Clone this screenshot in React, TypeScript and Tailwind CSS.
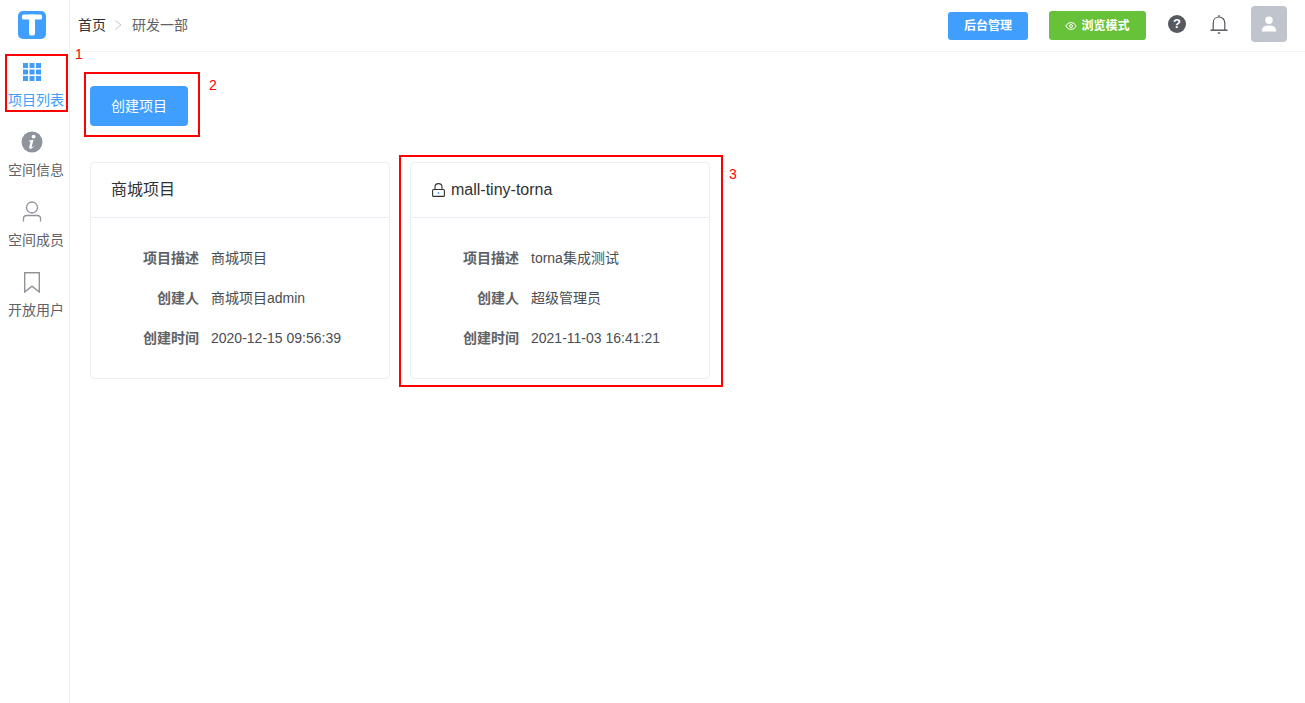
import { Eye } from "lucide-react";

const font = { fontFamily: '"Liberation Sans", "Noto Sans CJK SC", sans-serif' };

function GridIcon() {
    return (
        <svg width="18" height="18" viewBox="0 0 18 18" fill="#409eff">
            {[0, 6.5, 13].map((y) =>
                [0, 6.5, 13].map((x) => <rect key={`${x}-${y}`} x={x} y={y} width="5" height="5" />)
            )}
        </svg>
    );
}

function InfoIcon() {
    return (
        <svg width="22" height="22" viewBox="0 0 22 22">
            <circle cx="11" cy="11" r="10.5" fill="#8f939c" />
            <circle cx="12.6" cy="5.6" r="1.9" fill="#fff" />
            <path d="M8.2 9.4 L12.6 8.8 L10.7 15.6 C10.5 16.3 11 16.4 12.6 15.2 L12.9 15.8 C11.4 17.2 10.2 17.9 9.2 17.8 C8.2 17.7 8 16.9 8.3 15.8 L9.6 10.8 L8.2 10.6 Z" fill="#fff" />
        </svg>
    );
}

function MemberIcon() {
    return (
        <svg width="20" height="22" viewBox="0 0 20 22" fill="none" stroke="#8f939c" strokeWidth="1.3">
            <circle cx="10" cy="6.5" r="5.5" />
            <path d="M1.5 20.5 V17.5 C1.5 15.5 3 14.5 5 14.5 H15 C17 14.5 18.5 15.5 18.5 17.5 V20.5" />
        </svg>
    );
}

function BookmarkIcon() {
    return (
        <svg width="16" height="21" viewBox="0 0 16 21" fill="none" stroke="#8f939c" strokeWidth="1.4">
            <path d="M.7 .7 H15.3 V20 L8 14.2 L.7 20 Z" />
        </svg>
    );
}

function BellIcon() {
    return (
        <svg width="18" height="19" viewBox="0 0 18 19" fill="none" stroke="#55585f" strokeWidth="1.2">
            <path d="M3.2 15 V8 C3.2 4.6 5.6 2 9 2 C12.4 2 14.8 4.6 14.8 8 V15" />
            <path d="M9 0 V2" />
            <path d="M.5 15.2 H17.5" strokeWidth="1.5" />
            <path d="M7.8 18 H10.2" strokeWidth="1.4" />
        </svg>
    );
}

function LockIcon() {
    return (
        <svg className="ml-px" width="13" height="14" viewBox="0 0 13 14" fill="none" stroke="#303133" strokeWidth="1.1">
            <path d="M3 6.5 V4 C3 2 4.4 .6 6.5 .6 C8.6 .6 10 2 10 4 V6.5" />
            <rect x=".6" y="6.5" width="11.8" height="6.9" rx="1" />
            <path d="M6.5 9 V11" stroke="#409eff" strokeWidth="1.3" />
        </svg>
    );
}

const navItems = [
    { label: "项目列表", icon: <GridIcon />, active: true },
    { label: "空间信息", icon: <InfoIcon /> },
    { label: "空间成员", icon: <MemberIcon /> },
    { label: "开放用户", icon: <BookmarkIcon /> },
];

const projects = [
    { title: "商城项目", desc: "商城项目", creator: "商城项目admin", time: "2020-12-15 09:56:39" },
    { title: "mall-tiny-torna", desc: "torna集成测试", creator: "超级管理员", time: "2021-11-03 16:41:21", locked: true },
];

function Row({ label, value }: { label: string; value: string }) {
    return (
        <div className="flex h-10 items-center text-sm">
            <span className="w-[108px] text-right font-bold text-[#606266]">{label}</span>
            <span className="ml-3 text-[#4a4d52]">{value}</span>
        </div>
    );
}

export default function App() {
    return (
        <div className="relative flex h-[703px] w-[1305px] overflow-hidden bg-white" style={font}>
            <aside className="flex w-[70px] shrink-0 flex-col border-r border-[#eeeeee] pt-[11px]">
                <div className="ml-[18px] flex h-7 w-7 items-center justify-center rounded-[5px] bg-[#409eff]">
                    <svg width="28" height="28" viewBox="0 0 28 28" fill="#fff">
                        <rect x="4" y="3.5" width="20" height="5" rx="1.5" />
                        <rect x="11" y="3.5" width="6" height="21" rx="2" />
                    </svg>
                </div>
                <nav className="mt-[15px] flex flex-col">
                    {navItems.map((item) => (
                        <div key={item.label} className="flex h-[70px] w-[69px] flex-col">
                            <div className="flex h-[36px] w-[64px] items-center justify-center">{item.icon}</div>
                            <span className={`ml-2 text-sm leading-5 ${item.active ? "text-[#409eff]" : "text-[#606266]"}`}>
                                {item.label}
                            </span>
                        </div>
                    ))}
                </nav>
            </aside>

            <div className="flex min-w-0 flex-1 flex-col">
                <header className="flex h-[52px] shrink-0 items-center border-b border-[#f2f2f2] pl-2 pr-[18px]">
                    <div className="mb-0.5 flex items-center text-sm text-[#303133]">
                        <span>首页</span>
                        <svg className="ml-2 mr-[9px]" width="9" height="10" viewBox="0 0 9 10" fill="none" stroke="#c0c4cc">
                            <path d="M1.5 .5 L7 5 L1.5 9.5" />
                        </svg>
                        <span className="text-[#606266]">研发一部</span>
                    </div>
                    <div className="ml-auto flex items-center">
                        <button className="flex h-7 w-20 items-center justify-center rounded-[3px] bg-[#409eff] text-xs font-bold text-white">
                            后台管理
                        </button>
                        <button className="ml-[21px] flex h-[29px] w-[97px] items-center justify-center gap-1 rounded-[3px] bg-[#67c23a] text-xs font-bold text-white">
                            <Eye size={12} />
                            浏览模式
                        </button>
                        <div className="ml-[22px] mb-1 flex h-[18px] w-[18px] items-center justify-center rounded-full bg-[#55585f] text-[13px] font-bold leading-none text-white">
                            ?
                        </div>
                        <div className="ml-[24px] mb-0.5">
                            <BellIcon />
                        </div>
                        <div className="ml-[23px] mb-[3px] flex h-9 w-9 items-center justify-center rounded-[4px] bg-[#c0c4cc]">
                            <svg width="16" height="16" viewBox="0 0 16 16" fill="#fff">
                                <circle cx="8" cy="4.2" r="3.7" />
                                <path d="M.8 15.5 C.8 11 3.5 9.4 8 9.4 C12.5 9.4 15.2 11 15.2 15.5 Z" />
                            </svg>
                        </div>
                    </div>
                </header>

                <main className="px-5 pt-[34px]">
                    <button className="h-10 w-[98px] rounded-[4px] bg-[#409eff] text-sm text-white">创建项目</button>
                    <div className="mt-9 flex gap-5">
                        {projects.map((p) => (
                            <div key={p.title} className="h-[217px] w-[300px] rounded-[4px] border border-[#ebeef5] bg-white">
                                <div className="flex h-[55px] items-center gap-[6px] border-b border-[#ebeef5] pl-5 text-base text-[#303133]">
                                    {p.locked && <LockIcon />}
                                    <span>{p.title}</span>
                                </div>
                                <div className="pt-5">
                                    <Row label="项目描述" value={p.desc} />
                                    <Row label="创建人" value={p.creator} />
                                    <Row label="创建时间" value={p.time} />
                                </div>
                            </div>
                        ))}
                    </div>
                </main>
            </div>

            {/* red annotations drawn over the screenshot */}
            <div className="absolute left-[5px] top-[54px] h-[58px] w-[63px] border-2 border-[#ff0000]" />
            <span className="absolute left-[75px] top-[44px] text-sm text-[#ff0000]">1</span>
            <div className="absolute left-[84px] top-[72px] h-[65px] w-[116px] border-2 border-[#ff0000]" />
            <span className="absolute left-[209px] top-[75px] text-sm text-[#ff0000]">2</span>
            <div className="absolute left-[399px] top-[155px] h-[232px] w-[324px] border-2 border-[#ff0000]" />
            <span className="absolute left-[729px] top-[164px] text-sm text-[#ff0000]">3</span>
        </div>
    );
}
